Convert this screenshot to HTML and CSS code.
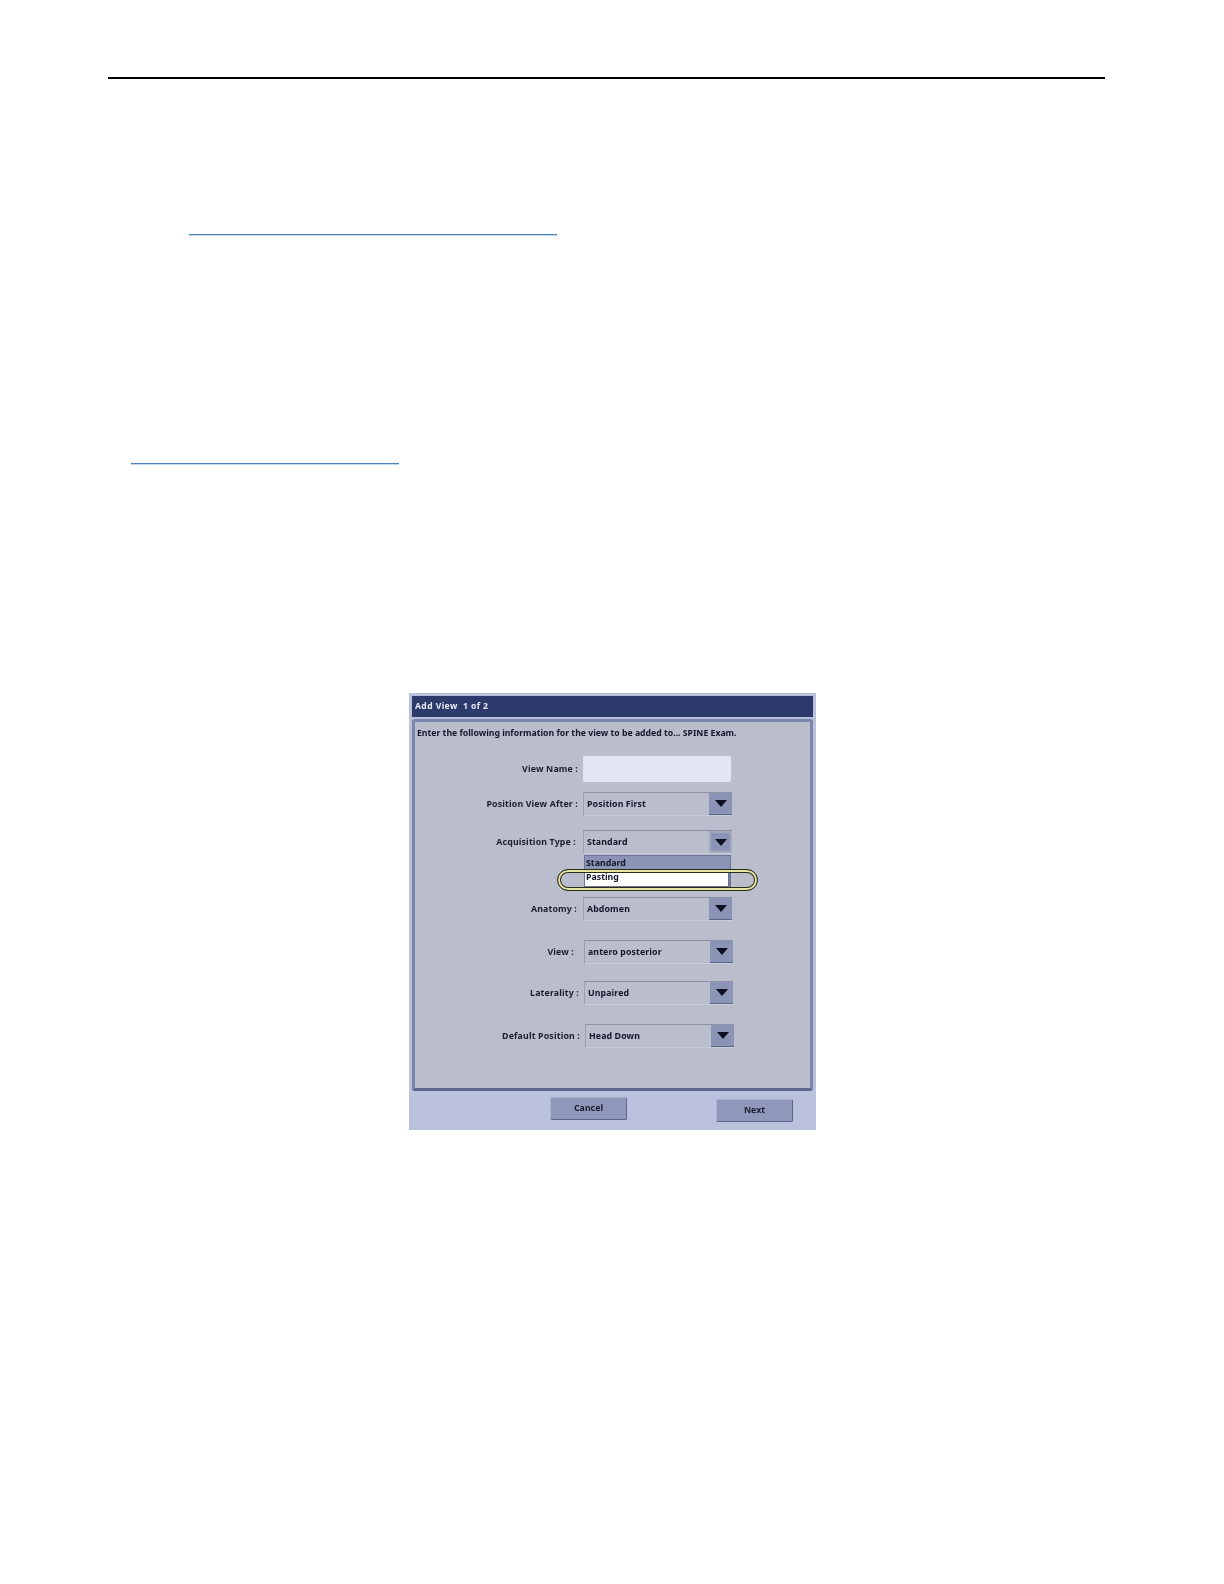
FILE: index.html
```html
<!DOCTYPE html>
<html lang="en">
<head>
    <meta charset="UTF-8">
    <title>Add View</title>
    <link rel="stylesheet" href="styles.css">
</head>
<body>
    <div class="page-rule"></div>
    <div class="link-line link-one"></div>
    <div class="link-line link-two"></div>

    <div class="dialog">
        <div class="title-bar">Add View &nbsp;1 of 2</div>
        <div class="panel">
            <p class="intro">Enter the following information for the view to be added to... SPINE Exam.</p>

            <div class="row row-name">
                <span class="label">View Name :</span>
                <div class="text-input"></div>
            </div>
            <div class="row row-after">
                <span class="label">Position View After :</span>
                <div class="select"><span class="value">Position First</span><span class="arrow"></span></div>
            </div>
            <div class="row row-type">
                <span class="label">Acquisition Type :</span>
                <div class="select select-open">
                    <span class="value">Standard</span><span class="arrow"></span>
                    <div class="menu">
                        <div class="menu-item">Standard</div>
                        <div class="menu-item menu-item-on">Pasting</div>
                    </div>
                    <div class="callout"></div>
                </div>
            </div>
            <div class="row row-anatomy">
                <span class="label">Anatomy :</span>
                <div class="select"><span class="value">Abdomen</span><span class="arrow"></span></div>
            </div>
            <div class="row row-view">
                <span class="label">View :</span>
                <div class="select"><span class="value">antero posterior</span><span class="arrow"></span></div>
            </div>
            <div class="row row-lat">
                <span class="label">Laterality :</span>
                <div class="select"><span class="value">Unpaired</span><span class="arrow"></span></div>
            </div>
            <div class="row row-pos">
                <span class="label">Default Position :</span>
                <div class="select"><span class="value">Head Down</span><span class="arrow"></span></div>
            </div>
        </div>
        <div class="buttons">
            <div class="btn">Cancel</div>
            <div class="btn btn-next">Next</div>
        </div>
    </div>
</body>
</html>
```
FILE: styles.css
```css
body{
    margin: 0;
    background: #fff;
    font-family: "Noto Sans", "DejaVu Sans", sans-serif;
}
.page-rule{
    height: 2px;
    margin: 77px 119px 0 108px;
    background: #000;
}
.link-line{
    height: 1px;
    background: #4a80b8;
    box-shadow: 0 1px 0 #c4d8ec;
}
.link-one{
    width: 368px;
    margin: 155px 0 0 189px;
}
.link-two{
    width: 268px;
    margin: 228px 0 0 131px;
}
.dialog{
    width: 407px;
    height: 437px;
    margin: 229px 0 0 409px;
    padding: 3px 3px 0;
    box-sizing: border-box;
    background: #b9c1dc;
    filter: blur(0.35px);
}
.title-bar{
    height: 21px;
    padding-left: 3px;
    background: #2e3a6c;
    color: #e8eaf4;
    font-size: 8.6px;
    font-weight: bold;
    letter-spacing: 0.4px;
    line-height: 21px;
}
.panel{
    height: 372px;
    margin-top: 2px;
    padding: 5px 0 0 2px;
    box-sizing: border-box;
    background: #babdcb;
    border: 3px solid #7c86ac;
    border-bottom-color: #5c6688;
    border-radius: 3px;
    position: relative;
}
.intro{
    margin: 0 0 17px;
    font-size: 8.7px;
    font-weight: bold;
    color: #14162a;
    line-height: 12px;
}
.row{
    display: flex;
    align-items: center;
    justify-content: flex-end;
    width: 315px;
    height: 26px;
}
.label{
    margin-right: 5px;
    font-size: 8.8px;
    font-weight: bold;
    letter-spacing: 0.15px;
    color: #1c1e30;
    white-space: nowrap;
}
.text-input{
    width: 148px;
    height: 26px;
    background: #e2e5f2;
    border-radius: 2px;
}
.select{
    display: flex;
    align-items: center;
    justify-content: space-between;
    width: 149px;
    height: 24px;
    padding-left: 3px;
    box-sizing: border-box;
    background: #babdcb;
    border-top: 1px solid #8d90a4;
    border-left: 1px solid #9c9fb2;
    border-bottom: 1px solid #c8cbd8;
    position: relative;
}
.value{
    font-size: 8.8px;
    font-weight: bold;
    letter-spacing: 0.1px;
    color: #14162a;
}
.arrow{
    display: flex;
    align-items: center;
    justify-content: center;
    width: 23px;
    height: 22px;
    background: #8c94b6;
    border-bottom: 1px solid #5c6688;
    box-sizing: border-box;
}
.arrow::after{
    content: "";
    border-top: 7px solid #0c0f22;
    border-left: 6px solid transparent;
    border-right: 6px solid transparent;
}
.select-open .arrow{
    border: 2px solid #a3a8bd;
}
.row-name{ width: 314px; }
.row-after{ margin-top: 9px; }
.row-type{ margin-top: 12px; }
.row-type .label{ margin-right: 7px; }
.row-anatomy{ margin-top: 41px; }
.row-anatomy .label{ margin-right: 6px; }
.row-view{ margin-top: 17px; width: 316px; }
.row-view .label{ margin-right: 10px; }
.row-lat{ margin-top: 15px; width: 316px; }
.row-pos{ margin-top: 17px; width: 317px; }
.menu{
    position: absolute;
    top: 24px;
    left: 0;
    width: 147px;
    border: 1px solid #6c7698;
    box-sizing: border-box;
}
.menu-item{
    height: 14px;
    padding-left: 1px;
    background: #8c94b6;
    font-size: 8.8px;
    font-weight: bold;
    line-height: 14px;
    color: #14162a;
}
.menu-item-on{
    height: 16px;
    background: #fff;
    line-height: 15px;
    border-right: 2px solid #6c7698;
    border-bottom: 2px solid #6c7698;
}
.callout{
    position: absolute;
    top: 38px;
    left: -27px;
    width: 201px;
    height: 22px;
    border: 1px solid #2a2a18;
    box-shadow: inset 0 0 0 2px #e6e6a0, inset 0 0 0 3px #2a2a18;
    border-radius: 11px;
    box-sizing: border-box;
}
.buttons{
    display: flex;
    justify-content: flex-end;
    gap: 89px;
    padding: 6px 20px 0 0;
}
.btn{
    width: 77px;
    height: 23px;
    background: #8f98bb;
    border-top: 1px solid #a9b1cf;
    border-left: 1px solid #a9b1cf;
    border-right: 1px solid #5c6688;
    border-bottom: 1px solid #5c6688;
    border-radius: 2px;
    box-sizing: border-box;
    font-size: 8.8px;
    font-weight: bold;
    line-height: 21px;
    text-align: center;
    color: #1c1e30;
}
.btn-next{
    margin-top: 2px;
}
```
